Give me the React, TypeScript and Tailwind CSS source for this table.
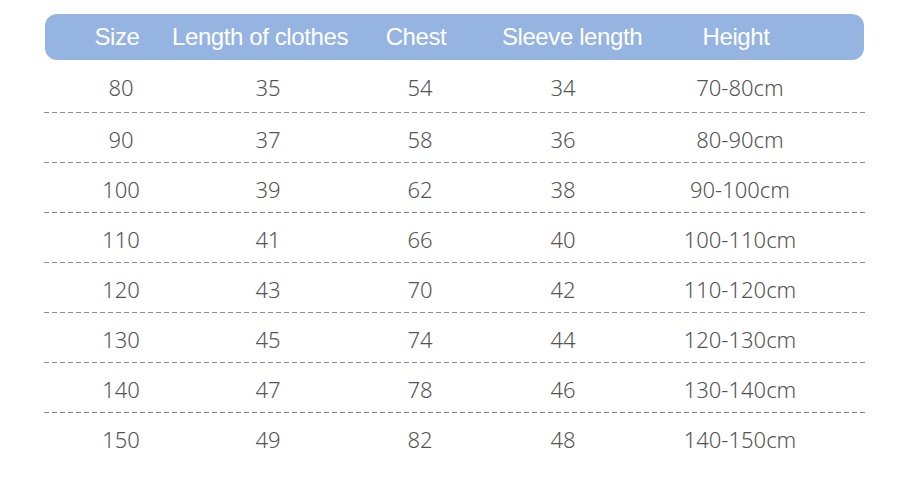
const headers = ['Size', 'Length of clothes', 'Chest', 'Sleeve length', 'Height']

const rows = [
  ['80', '35', '54', '34', '70-80cm'],
  ['90', '37', '58', '36', '80-90cm'],
  ['100', '39', '62', '38', '90-100cm'],
  ['110', '41', '66', '40', '100-110cm'],
  ['120', '43', '70', '42', '110-120cm'],
  ['130', '45', '74', '44', '120-130cm'],
  ['140', '47', '78', '46', '130-140cm'],
  ['150', '49', '82', '48', '140-150cm'],
]

export default function App() {
  return (
    <div className="w-[916px] h-[484px] bg-white pt-[14px] pl-[45px]">
      <div className="w-[819px]">
        {/* header bar */}
        <div className="h-[46px] rounded-[12px] bg-[#95b4e1] grid grid-cols-[144px_142px_170px_142px_186px] items-center font-['Liberation_Sans',Arial,sans-serif] text-[24px] tracking-[-0.4px] text-white">
          {headers.map((h) => (
            <div key={h} className="flex justify-center whitespace-nowrap">{h}</div>
          ))}
        </div>

        {/* rows */}
        {rows.map((r, i) => (
          <div key={r[0]}>
            <div
              className={
                'grid grid-cols-[152px_142px_162px_124px_230px] items-center font-["Noto_Sans",sans-serif] font-light text-[22px] text-[#545454] ' +
                (i === 0 ? 'h-[52px] pt-[3px]' : 'h-[49px] pt-[4px]')
              }
            >
              {r.map((c, j) => (
                <div key={j} className="flex justify-center whitespace-nowrap">{c}</div>
              ))}
            </div>
            {i < rows.length - 1 && (
              <div className="h-px w-[822px] -ml-px bg-[linear-gradient(to_right,#8c8c8c_5px,transparent_5px)] bg-[length:8px_1px] bg-repeat-x" />
            )}
          </div>
        ))}
      </div>
    </div>
  )
}
